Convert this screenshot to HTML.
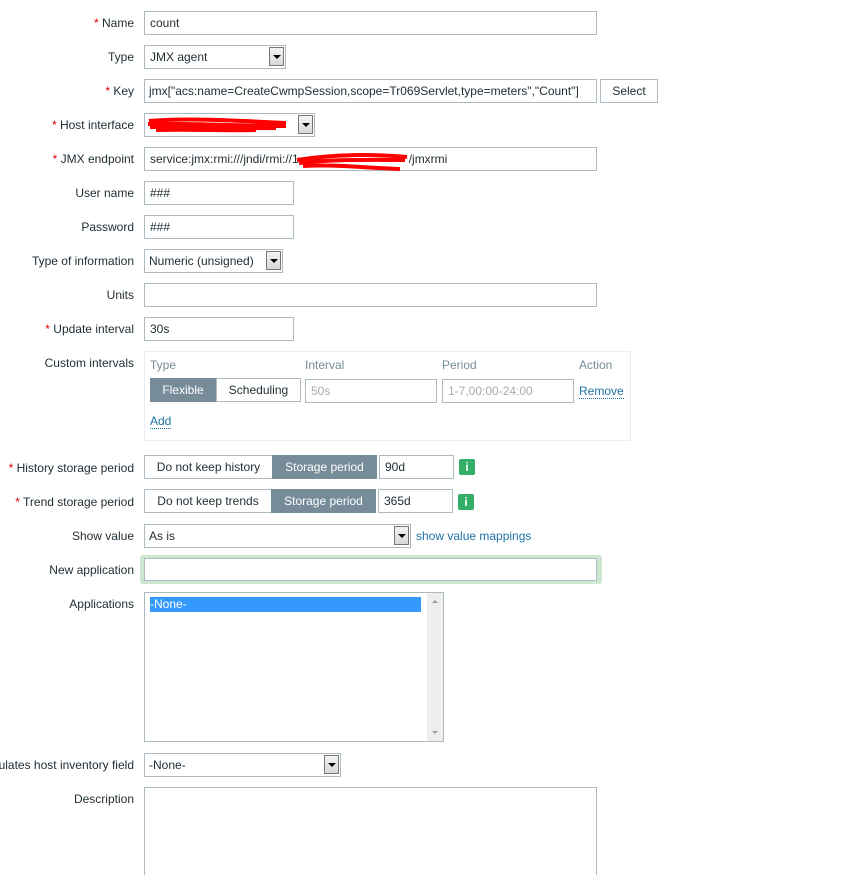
<!DOCTYPE html>
<html style="overflow:hidden;height:875px"><head><style>
body{margin:0;width:863px;height:875px;background:#fff;font-family:"Liberation Sans",Arial,sans-serif;font-size:12px;color:#1f2c33;position:relative;overflow:hidden}
.l{position:absolute;right:729px;white-space:nowrap;line-height:14px;margin-top:1px}
.l b{color:#d40000;font-weight:normal}
.b{position:absolute;box-sizing:border-box;border:1px solid #acbbc2;background:#fff;line-height:23px;padding-left:5px;white-space:nowrap;overflow:hidden}
.sel .a{position:absolute;right:1px;top:1px;width:15px;height:19px;border:1px solid #777;box-sizing:border-box;background:linear-gradient(#f4f4f4,#d8d8d8)}
.sel .a:after{content:"";position:absolute;left:3px;top:7px;border-left:4px solid transparent;border-right:4px solid transparent;border-top:4px solid #000}
.seg{position:absolute;box-sizing:border-box;border:1px solid #acbbc2;background:#fff;text-align:center;line-height:23px}
.on{background:#768d99;color:#fff;border-color:#768d99}
.info{position:absolute;width:16px;height:16px;background:#34af67;color:#fff;font-weight:bold;text-align:center;line-height:16px;font-size:12px;border-radius:2px}
.lk{position:absolute;color:#1f72a6;border-bottom:1px dotted #1f72a6;line-height:14px}
.g{color:#aaa}
</style></head><body>
<div class="l" style="top:15px"><b>*</b> Name</div>
<div class="b" style="left:144px;top:11px;width:453px;height:24px">count</div>
<div class="l" style="top:49px">Type</div>
<div class="b sel" style="left:144px;top:45px;width:142px;height:24px">JMX agent<div class="a"></div></div>
<div class="l" style="top:83px"><b>*</b> Key</div>
<div class="b" style="left:144px;top:79px;width:453px;height:24px;padding-left:4px">jmx["acs:name=CreateCwmpSession,scope=Tr069Servlet,type=meters","Count"]</div>
<div class="b" style="left:600px;top:79px;width:58px;height:24px;padding:0;text-align:center;background:#fff">Select</div>
<div class="l" style="top:117px"><b>*</b> Host interface</div>
<div class="b sel" style="left:144px;top:113px;width:171px;height:24px"><div class="a"></div></div>
<svg style="position:absolute;left:146px;top:114px" width="150" height="22"><path d="M3 7 C40 4 80 6 140 9 M2 10 C50 9 90 12 140 12 M4 13 C50 12 90 15 130 14 M10 16 C50 15 80 17 110 16" stroke="#f00" stroke-width="4" fill="none"/></svg>
<div class="l" style="top:151px"><b>*</b> JMX endpoint</div>
<div class="b" style="left:144px;top:147px;width:453px;height:24px">service:jmx:rmi:///jndi/rmi://1<span style="display:inline-block;width:110px"></span>/jmxrmi</div>
<svg style="position:absolute;left:295px;top:150px" width="120" height="24"><path d="M2 10 C40 4 80 4 112 7 M4 13 C40 9 80 10 110 10 M8 16 C40 14 70 18 105 19" stroke="#f00" stroke-width="4" fill="none"/></svg>
<div class="l" style="top:185px">User name</div>
<div class="b" style="left:144px;top:181px;width:150px;height:24px">###</div>
<div class="l" style="top:219px">Password</div>
<div class="b" style="left:144px;top:215px;width:150px;height:24px">###</div>
<div class="l" style="top:253px">Type of information</div>
<div class="b sel" style="left:144px;top:249px;width:139px;height:24px;padding-left:4px">Numeric (unsigned)<div class="a"></div></div>
<div class="l" style="top:287px">Units</div>
<div class="b" style="left:144px;top:283px;width:453px;height:24px"></div>
<div class="l" style="top:355px">Custom intervals</div>
<div class="l" style="top:321px"><b>*</b> Update interval</div>
<div class="b" style="left:144px;top:317px;width:150px;height:24px">30s</div>
<div style="position:absolute;left:144px;top:351px;width:487px;height:90px;border:1px solid #ebeef0;box-sizing:border-box"></div>
<div style="position:absolute;left:150px;top:358px;color:#768d99">Type</div>
<div style="position:absolute;left:305px;top:358px;color:#768d99">Interval</div>
<div style="position:absolute;left:442px;top:358px;color:#768d99">Period</div>
<div style="position:absolute;left:579px;top:358px;color:#768d99">Action</div>
<div class="seg on" style="left:150px;top:378px;width:66px;height:24px">Flexible</div>
<div class="seg" style="left:216px;top:378px;width:85px;height:24px">Scheduling</div>
<div class="b g" style="left:305px;top:379px;width:132px;height:24px">50s</div>
<div class="b g" style="left:442px;top:379px;width:132px;height:24px">1-7,00:00-24:00</div>
<div class="lk" style="left:579px;top:384px">Remove</div>
<div class="lk" style="left:150px;top:414px">Add</div>
<div class="l" style="top:460px"><b>*</b> History storage period</div>
<div class="seg" style="left:144px;top:455px;width:129px;height:24px">Do not keep history</div>
<div class="seg on" style="left:272px;top:455px;width:105px;height:24px">Storage period</div>
<div class="b" style="left:379px;top:455px;width:75px;height:24px">90d</div>
<div class="info" style="left:459px;top:459px">i</div>
<div class="l" style="top:494px"><b>*</b> Trend storage period</div>
<div class="seg" style="left:144px;top:489px;width:128px;height:24px">Do not keep trends</div>
<div class="seg on" style="left:271px;top:489px;width:105px;height:24px">Storage period</div>
<div class="b" style="left:378px;top:489px;width:75px;height:24px">365d</div>
<div class="info" style="left:458px;top:494px">i</div>
<div class="l" style="top:528px">Show value</div>
<div class="b sel" style="left:144px;top:524px;width:267px;height:24px;padding-left:4px">As is<div class="a"></div></div>
<div style="position:absolute;left:416px;top:529px;color:#1f72a6">show value mappings</div>
<div class="l" style="top:562px">New application</div>
<div style="position:absolute;left:140px;top:555px;width:462px;height:29px;background:#cfe6d3;border-radius:3px"></div>
<div class="b" style="left:144px;top:558px;width:453px;height:23px"></div>
<div class="l" style="top:596px">Applications</div>
<div class="b" style="left:144px;top:592px;width:300px;height:150px;padding:0"></div>
<div style="position:absolute;left:150px;top:597px;width:271px;height:15px;background:#3399ff;color:#fff;line-height:15px">-None-</div>
<div style="position:absolute;left:427px;top:593px;width:16px;height:148px;background:#eee"></div>
<div style="position:absolute;left:432px;top:600px;border-left:3px solid transparent;border-right:3px solid transparent;border-bottom:3px solid #999"></div>
<div style="position:absolute;left:432px;top:731px;border-left:3px solid transparent;border-right:3px solid transparent;border-top:3px solid #999"></div>
<div class="l" style="top:757px">ulates host inventory field</div>
<div class="b sel" style="left:144px;top:753px;width:197px;height:24px;padding-left:4px">-None-<div class="a"></div></div>
<div class="l" style="top:791px">Description</div>
<div class="b" style="left:144px;top:787px;width:453px;height:120px"></div>
</body></html>
